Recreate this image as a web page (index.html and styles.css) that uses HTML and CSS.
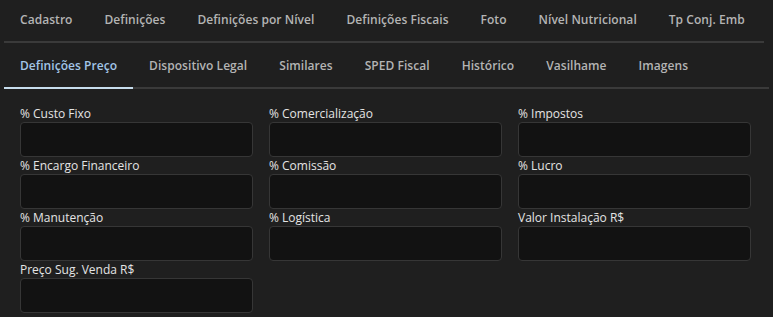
FILE: index.html
```html
<!DOCTYPE html>
<html lang="pt-BR">
<head>
    <meta charset="UTF-8">
    <meta name="viewport" content="width=device-width, initial-scale=1.0">
    <title>Produto - Definições Preço</title>
    <link rel="stylesheet" href="styles.css">
</head>
<body>
    <div class="container">
        <!-- Primeira linha de abas -->
        <div class="tabs tabs-top">
            <div class="tab">Cadastro</div>
            <div class="tab">Definições</div>
            <div class="tab">Definições por Nível</div>
            <div class="tab">Definições Fiscais</div>
            <div class="tab">Foto</div>
            <div class="tab">Nível Nutricional</div>
            <div class="tab">Tp Conj. Emb</div>
        </div>

        <!-- Segunda linha de abas -->
        <div class="tabs tabs-bottom">
            <div class="tab active">Definições Preço</div>
            <div class="tab">Dispositivo Legal</div>
            <div class="tab">Similares</div>
            <div class="tab">SPED Fiscal</div>
            <div class="tab">Histórico</div>
            <div class="tab">Vasilhame</div>
            <div class="tab">Imagens</div>
        </div>

        <!-- Campos de preço -->
        <div class="form-grid">
            <div class="form-group">
                <label for="custo_fixo">% Custo Fixo</label>
                <input type="text" id="custo_fixo">
            </div>
            <div class="form-group">
                <label for="comercializacao">% Comercialização</label>
                <input type="text" id="comercializacao">
            </div>
            <div class="form-group">
                <label for="impostos">% Impostos</label>
                <input type="text" id="impostos">
            </div>
            <div class="form-group">
                <label for="encargo">% Encargo Financeiro</label>
                <input type="text" id="encargo">
            </div>
            <div class="form-group">
                <label for="comissao">% Comissão</label>
                <input type="text" id="comissao">
            </div>
            <div class="form-group">
                <label for="lucro">% Lucro</label>
                <input type="text" id="lucro">
            </div>
            <div class="form-group">
                <label for="manutencao">% Manutenção</label>
                <input type="text" id="manutencao">
            </div>
            <div class="form-group">
                <label for="logistica">% Logística</label>
                <input type="text" id="logistica">
            </div>
            <div class="form-group">
                <label for="instalacao">Valor Instalação R$</label>
                <input type="text" id="instalacao">
            </div>
            <div class="form-group">
                <label for="preco_sug">Preço Sug. Venda R$</label>
                <input type="text" id="preco_sug">
            </div>
        </div>
    </div>
</body>
</html>
```

FILE: styles.css
```css
        body {
            font-family: "Open Sans", Arial, sans-serif;
            margin: 0;
            padding: 0;
            background-color: #1f1f1f;
            color: #e2e2e2;
            overflow: hidden;
        }
        .container {
            padding-left: 4px;
        }
        .tabs {
            display: flex;
            align-items: center;
            border-bottom: 2px solid #3a3a3a;
        }
        .tabs-top {
            height: 41px;
            margin-right: 9px;
        }
        .tabs-bottom {
            height: 44px;
            margin-right: 4px;
            align-items: stretch;
        }
        .tab {
            padding: 0 16px;
            font-size: 12px;
            font-weight: 600;
            letter-spacing: 0.05px;
            color: #b4b4b4;
            white-space: nowrap;
            display: flex;
            align-items: center;
        }
        .tabs-top .tab {
            padding-bottom: 3px;
        }
        .tab.active {
            color: #a3c6e8;
            border-bottom: 2px solid #c6dcec;
            margin-bottom: -2px;
        }
        .form-grid {
            display: grid;
            grid-template-columns: repeat(3, 233px);
            column-gap: 16px;
            padding: 16px 0 0 16px;
        }
        .form-group {
            display: flex;
            flex-direction: column;
        }
        .form-group label {
            font-size: 12px;
            line-height: 17px;
            color: #e4e4e4;
        }
        .form-group input {
            box-sizing: border-box;
            height: 35px;
            width: 100%;
            margin: 0;
            padding: 6px 8px;
            background-color: #121212;
            border: 1px solid #363636;
            border-radius: 4px;
            color: #e4e4e4;
            font-family: inherit;
            font-size: 13px;
        }
```
